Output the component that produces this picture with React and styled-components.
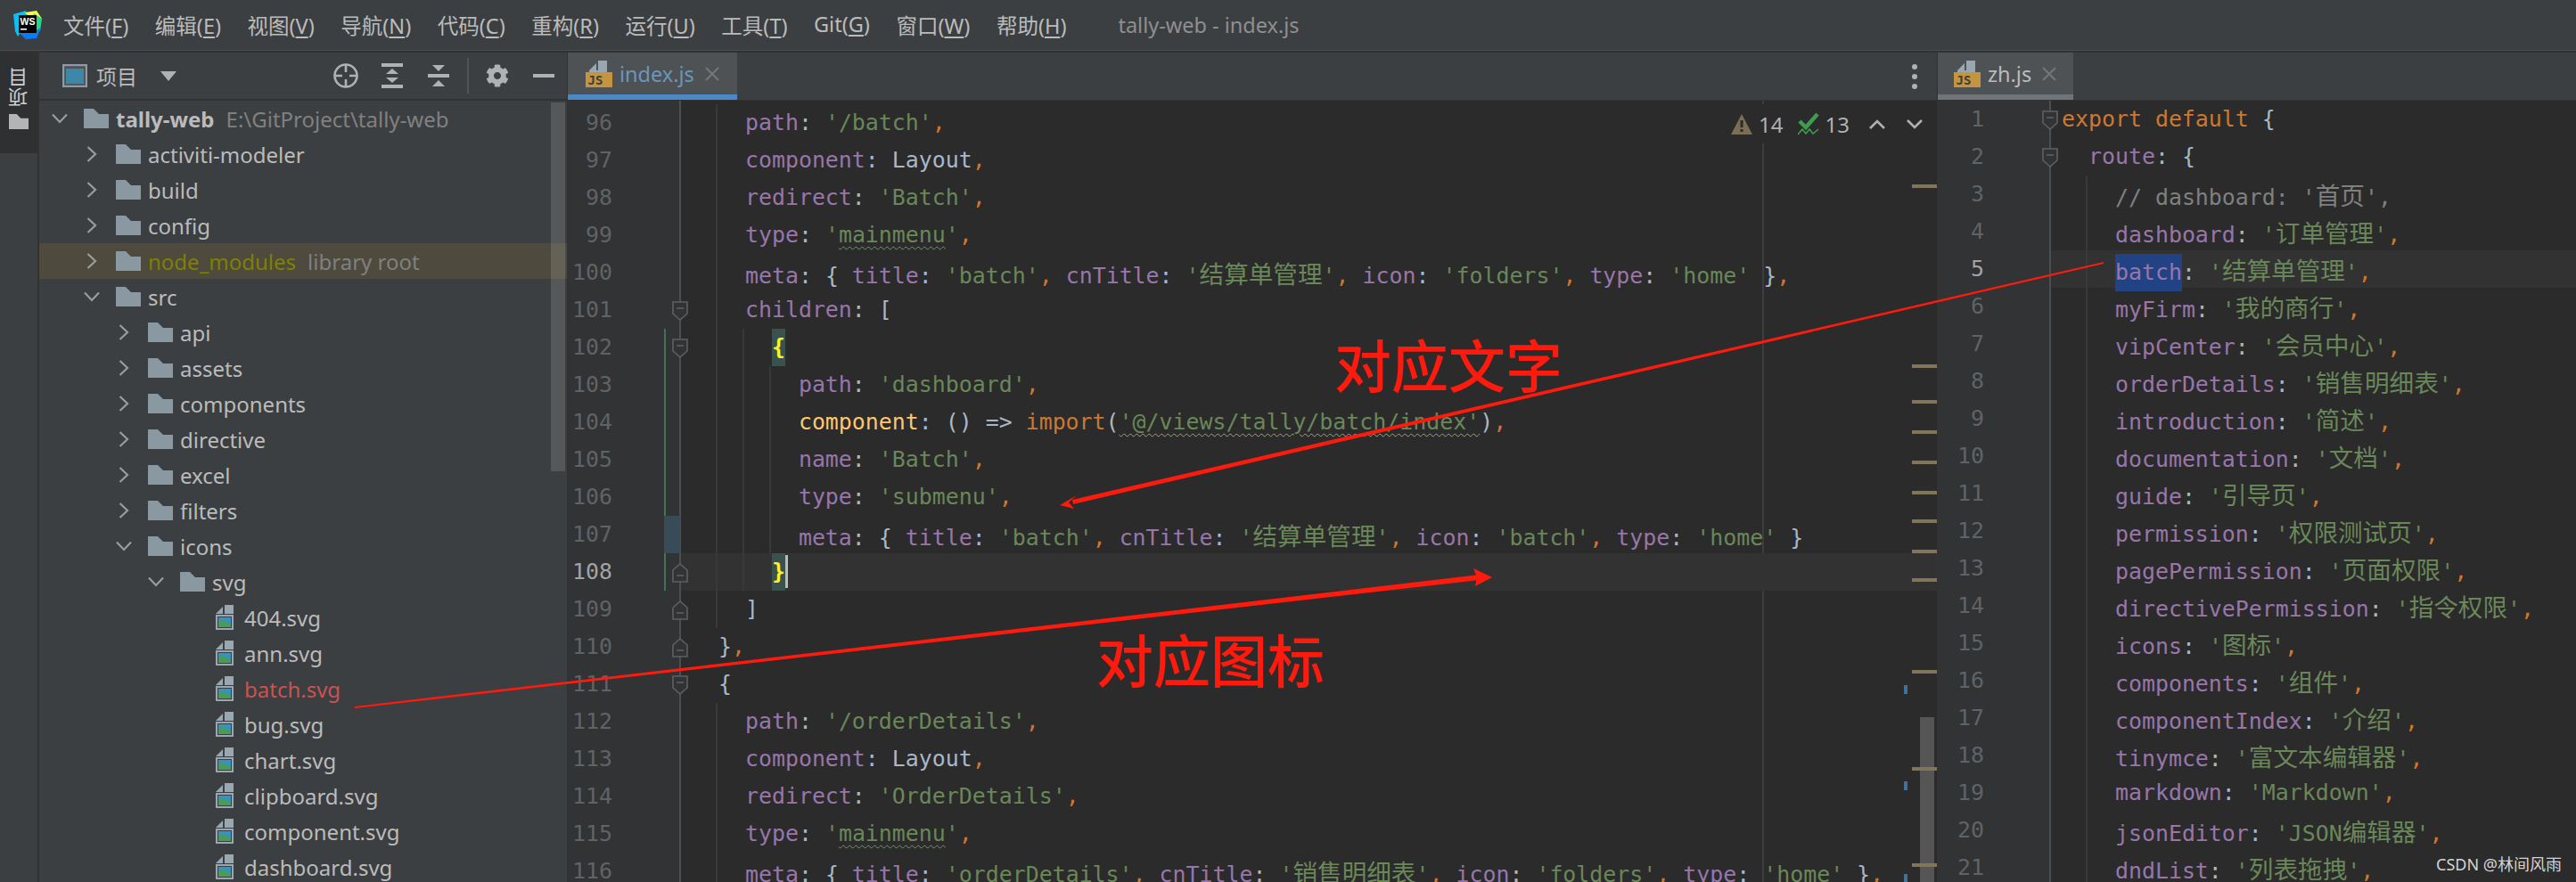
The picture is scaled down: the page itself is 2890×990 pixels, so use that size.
import React from "react";
import styled, { createGlobalStyle } from "styled-components";
import { FaCog } from "react-icons/fa";

const UI_FONT = '"Noto Sans", "Noto Sans CJK SC", sans-serif';
const MONO_FONT = '"DejaVu Sans Mono", "Noto Sans CJK SC", monospace';

const menus = [
  ["文件", "F"],
  ["编辑", "E"],
  ["视图", "V"],
  ["导航", "N"],
  ["代码", "C"],
  ["重构", "R"],
  ["运行", "U"],
  ["工具", "T"],
  ["Git", "G"],
  ["窗口", "W"],
  ["帮助", "H"],
];

const tree = [
  { level: 0, name: "tally-web", open: true, root: true, note: "E:\\GitProject\\tally-web" },
  { level: 1, name: "activiti-modeler" },
  { level: 1, name: "build" },
  { level: 1, name: "config" },
  { level: 1, name: "node_modules", library: true, note: "library root" },
  { level: 1, name: "src", open: true },
  { level: 2, name: "api" },
  { level: 2, name: "assets" },
  { level: 2, name: "components" },
  { level: 2, name: "directive" },
  { level: 2, name: "excel" },
  { level: 2, name: "filters" },
  { level: 2, name: "icons", open: true },
  { level: 3, name: "svg", open: true },
  { level: 4, name: "404.svg", file: true },
  { level: 4, name: "ann.svg", file: true },
  { level: 4, name: "batch.svg", file: true, changed: true },
  { level: 4, name: "bug.svg", file: true },
  { level: 4, name: "chart.svg", file: true },
  { level: 4, name: "clipboard.svg", file: true },
  { level: 4, name: "component.svg", file: true },
  { level: 4, name: "dashboard.svg", file: true },
];

const indexLines = [
  "    path: '/batch',",
  "    component: Layout,",
  "    redirect: 'Batch',",
  "    type: 'mainmenu',",
  "    meta: { title: 'batch', cnTitle: '结算单管理', icon: 'folders', type: 'home' },",
  "    children: [",
  "      {",
  "        path: 'dashboard',",
  "        component: () => import('@/views/tally/batch/index'),",
  "        name: 'Batch',",
  "        type: 'submenu',",
  "        meta: { title: 'batch', cnTitle: '结算单管理', icon: 'batch', type: 'home' }",
  "      }",
  "    ]",
  "  },",
  "  {",
  "    path: '/orderDetails',",
  "    component: Layout,",
  "    redirect: 'OrderDetails',",
  "    type: 'mainmenu',",
  "    meta: { title: 'orderDetails', cnTitle: '销售明细表', icon: 'folders', type: 'home' },",
];

const zhLines = [
  "export default {",
  "  route: {",
  "    // dashboard: '首页',",
  "    dashboard: '订单管理',",
  "    batch: '结算单管理',",
  "    myFirm: '我的商行',",
  "    vipCenter: '会员中心',",
  "    orderDetails: '销售明细表',",
  "    introduction: '简述',",
  "    documentation: '文档',",
  "    guide: '引导页',",
  "    permission: '权限测试页',",
  "    pagePermission: '页面权限',",
  "    directivePermission: '指令权限',",
  "    icons: '图标',",
  "    components: '组件',",
  "    componentIndex: '介绍',",
  "    tinymce: '富文本编辑器',",
  "    markdown: 'Markdown',",
  "    jsonEditor: 'JSON编辑器',",
  "    dndList: '列表拖拽',",
];

const indexFolds = { 101: "down", 102: "down", 108: "up", 109: "up", 110: "up", 111: "down" };
const zhFolds = { 1: "down", 2: "down" };
const stripeTops = [208, 410, 450, 484, 518, 552, 584, 618, 650, 753, 862, 970];
const blueTops = [770, 878, 982];

const GlobalStyle = createGlobalStyle`
  html, body {
    margin: 0;
    padding: 0;
    background: #3c3f41;
  }
`;

const Page = styled.div`
  position: relative;
  width: 2890px;
  height: 990px;
  overflow: hidden;
  display: flex;
  flex-direction: column;
  font-family: ${UI_FONT};
  background: #3c3f41;
`;

const TitleBar = styled.header`
  height: 57px;
  flex: none;
  box-sizing: border-box;
  display: flex;
  align-items: center;
  padding-left: 14px;
  color: #bbbbbb;
  font-size: 23.5px;
  border-bottom: 1px solid #4a4c4e;
`;

const Menu = styled.nav`
  display: flex;
  gap: 29.5px;
  margin-left: 23px;
`;

const MenuItem = styled.span`
  white-space: nowrap;
  u {
    text-underline-offset: 3px;
  }
`;

const WindowTitle = styled.span`
  margin-left: 58px;
  color: #8d8f91;
  white-space: nowrap;
`;

const Body = styled.div`
  flex: 1;
  min-height: 0;
  display: flex;
  border-top: 2px solid #323232;
`;

const Strip = styled.aside`
  width: 44px;
  flex: none;
  box-sizing: border-box;
  border-right: 2px solid #323232;
`;

const StripTab = styled.div`
  height: 113px;
  background: #2e3032;
  display: flex;
  flex-direction: column;
  align-items: center;
  padding-top: 17px;
  box-sizing: border-box;
  gap: 8px;
`;

const VerticalLabel = styled.span`
  writing-mode: vertical-rl;
  transform: rotate(180deg);
  color: #d0d0d0;
  font-size: 22px;
  line-height: 22px;
`;

const ProjectPanel = styled.section`
  position: relative;
  width: 592px;
  flex: none;
  display: flex;
  flex-direction: column;
  border-right: 1px solid #323232;
`;

const PanelHeader = styled.div`
  height: 54px;
  flex: none;
  box-sizing: border-box;
  border-bottom: 2px solid #323232;
  display: flex;
  align-items: center;
  padding-left: 26px;
  color: #bbbbbb;
  font-size: 23px;
`;

const PanelTitle = styled.span`
  margin-left: 10px;
`;

const Dropdown = styled.span`
  margin-left: 26px;
  width: 0;
  height: 0;
  border-left: 9px solid transparent;
  border-right: 9px solid transparent;
  border-top: 11px solid #afb1b3;
`;

const Tools = styled.div`
  margin-left: auto;
  display: flex;
  align-items: center;
  color: #afb1b3;
`;

const ToolButton = styled.span`
  width: 52px;
  height: 52px;
  display: flex;
  align-items: center;
  justify-content: center;
`;

const ToolSeparator = styled.span`
  width: 2px;
  height: 40px;
  margin: 0 6px;
  background: #515456;
`;

const Tree = styled.div`
  display: flex;
  flex-direction: column;
`;

const TreeRow = styled.div`
  height: 40px;
  flex: none;
  display: flex;
  align-items: center;
  padding-left: ${(p) => 13 + p.$level * 36}px;
  background: ${(p) => (p.$library ? "#4e4a3e" : "transparent")};
  font-size: 24px;
  white-space: nowrap;
  color: #bbbbbb;
`;

const ChevronBox = styled.span`
  width: 20px;
  height: 40px;
  flex: none;
  display: flex;
  align-items: center;
  justify-content: center;
  margin-right: 17px;
`;

const FileIconSlot = styled.span`
  display: flex;
  margin-left: 4px;
`;

const TreeName = styled.span`
  margin-left: ${(p) => (p.$file ? 12 : 8)}px;
  font-weight: ${(p) => (p.$root ? 700 : 400)};
  color: ${(p) => (p.$changed ? "#c75450" : p.$library ? "#808000" : "#bbbbbb")};
`;

const TreeNote = styled.span`
  margin-left: 13px;
  color: #808080;
`;

const TreeScrollbar = styled.div`
  position: absolute;
  left: 574px;
  top: 56px;
  width: 16px;
  height: 414px;
  background: rgba(255, 255, 255, 0.13);
`;

const Editors = styled.main`
  flex: 1;
  min-width: 0;
  display: flex;
`;

const EditorPane = styled.section`
  position: relative;
  width: ${(p) => p.$width}px;
  flex: none;
  display: flex;
  flex-direction: column;
  border-left: ${(p) => (p.$split ? "1px solid #323232" : "none")};
  box-sizing: border-box;
`;

const TabBar = styled.div`
  height: 54px;
  flex: none;
  box-sizing: border-box;
  display: flex;
  align-items: stretch;
  justify-content: space-between;
  background: #3c3f41;
  border-bottom: 1px solid #323232;
`;

const Tab = styled.div`
  width: ${(p) => p.$width}px;
  box-sizing: border-box;
  display: flex;
  align-items: center;
  padding: 0 0 6px ${(p) => p.$pad}px;
  background: #4e5254;
  box-shadow: inset 0 -6px 0 ${(p) => p.$accent};
  color: ${(p) => p.$color};
  font-size: 23.5px;
`;

const TabName = styled.span`
  margin-left: 8px;
`;

const TabClose = styled.svg`
  margin-left: 12px;
  flex: none;
`;

const Kebab = styled.div`
  width: 50px;
  display: flex;
  flex-direction: column;
  align-items: center;
  justify-content: center;
  gap: 5px;
  span {
    width: 6px;
    height: 6px;
    border-radius: 50%;
    background: #afb1b3;
  }
`;

const EditorBody = styled.div`
  flex: 1;
  min-height: 0;
  display: flex;
`;

const Gutter = styled.div`
  position: relative;
  z-index: 1;
  width: ${(p) => p.$width}px;
  flex: none;
  box-sizing: border-box;
  padding-top: ${(p) => p.$top}px;
  background: #313335;
  border-right: 2px solid #4c4e50;
  display: flex;
  flex-direction: column;
`;

const GutterCell = styled.div`
  position: relative;
  height: 42px;
  flex: none;
  box-sizing: border-box;
  padding-right: ${(p) => p.$numberRight}px;
  text-align: right;
  font-family: ${MONO_FONT};
  font-size: 24.9px;
  line-height: 42px;
  color: ${(p) => (p.$current ? "#a4a3a3" : "#606366")};
`;

const ChangeBar = styled.span`
  position: absolute;
  left: 108px;
  top: 0;
  bottom: 0;
  width: 2px;
  background: #447152;
`;

const ModifiedBlock = styled.span`
  position: absolute;
  left: 108px;
  top: 0;
  bottom: 0;
  width: 18px;
  background: #374c57;
`;

const FoldIcon = styled.svg`
  position: absolute;
  right: -10px;
  top: 11px;
`;

const CodeArea = styled.div`
  position: relative;
  flex: 1;
  min-width: 0;
  box-sizing: border-box;
  padding-top: ${(p) => p.$top}px;
  background: #2b2b2b;
  overflow: hidden;
`;

const MarginLine = styled.span`
  position: absolute;
  left: 1213px;
  top: 0;
  bottom: 0;
  width: 2px;
  background: #3d3d3d;
`;

const CodeLine = styled.div`
  position: relative;
  height: 42px;
  padding-left: 12px;
  font-family: ${MONO_FONT};
  font-size: 24.9px;
  line-height: 42px;
  white-space: pre;
  color: #a9b7c6;
  background: ${(p) => (p.$current ? "#323232" : "transparent")};
`;

const IndentGuide = styled.span`
  position: absolute;
  top: 0;
  bottom: 0;
  width: 2px;
  left: ${(p) => 12 + p.$col * 15 - 3}px;
  background: #393939;
`;

const Prop = styled.span`
  color: #9876aa;
`;

const Str = styled.span`
  color: #6a8759;
`;

const Keyword = styled.span`
  color: #cc7832;
`;

const Method = styled.span`
  color: #ffc66d;
`;

const Comment = styled.span`
  color: #808080;
`;

const Cjk = styled.span`
  font-family: "Noto Sans CJK SC", sans-serif;
  font-size: 27.6px;
`;

const Wavy = styled.span`
  text-decoration: underline wavy ${(p) => p.$color};
  text-decoration-thickness: 1px;
  text-underline-offset: 4px;
`;

const Selected = styled.span`
  display: inline-block;
  height: 42px;
  background: #214283;
`;

const Brace = styled.span`
  position: relative;
  display: inline-block;
  height: 42px;
  color: #ffef28;
  font-weight: 700;
  background: #3b514d;
`;

const Caret = styled.span`
  position: absolute;
  left: 15px;
  top: 2px;
  width: 3px;
  height: 37px;
  background: #bbbbbb;
`;

const Inspections = styled.div`
  position: absolute;
  top: 4px;
  right: 16px;
  height: 44px;
  display: flex;
  align-items: center;
  background: #2b2b2b;
  color: #afb1b3;
  font-size: 24px;
  padding-left: 4px;
`;

const Count = styled.span`
  margin: 0 ${(p) => p.$after}px 0 7px;
`;

const NavCaret = styled.svg`
  flex: none;
  margin-left: ${(p) => p.$before}px;
`;

const Stripe = styled.span`
  position: absolute;
  right: 0;
  width: 28px;
  height: 4px;
  background: #80765a;
  z-index: 1;
`;

const BlueMark = styled.span`
  position: absolute;
  right: 33px;
  width: 4px;
  height: 10px;
  background: #40719c;
`;

const EditorScrollbar = styled.span`
  position: absolute;
  right: 3px;
  top: 692px;
  bottom: 0;
  width: 16px;
  background: rgba(255, 255, 255, 0.2);
`;

const Arrows = styled.svg`
  position: absolute;
  left: 0;
  top: 0;
  pointer-events: none;
  z-index: 5;
`;

const Note = styled.span`
  position: absolute;
  left: ${(p) => p.$x}px;
  top: ${(p) => p.$y}px;
  z-index: 5;
  font-family: "Noto Sans CJK SC", sans-serif;
  font-size: 64px;
  line-height: 64px;
  font-weight: 500;
  color: #ff1a0e;
  white-space: nowrap;
`;

const Watermark = styled.span`
  position: absolute;
  right: 16px;
  bottom: 8px;
  z-index: 5;
  font-family: "Noto Sans", "Noto Sans CJK SC", sans-serif;
  font-size: 18px;
  line-height: 24px;
  color: #d4d4d4;
  white-space: nowrap;
`;

function Logo() {
  return (
    <svg width="34" height="34" viewBox="0 0 34 34">
      <polygon points="1,5 15,1 18,12 6,30 3,24" fill="#07c3f2" />
      <polygon points="14,3 27,1 33,10 24,14" fill="#fcf84a" />
      <polygon points="24,4 33,10 31,24 20,20" fill="#21d789" />
      <polygon points="6,24 22,26 32,20 27,32 15,33" fill="#087cfa" />
      <rect x="7" y="6" width="20" height="20" fill="#000" />
      <text x="8.5" y="16.5" fontFamily="Liberation Sans, sans-serif" fontWeight="700" fontSize="10.5" fill="#fff">
        WS
      </text>
      <rect x="9" y="21" width="7" height="1.6" fill="#fff" />
    </svg>
  );
}

function FolderIcon({ size = 28, color = "#8a98a2" }) {
  return (
    <svg width={size} height={(size * 22) / 28} viewBox="0 0 28 22" style={{ flex: "none" }}>
      <polygon points="0,0 11,0 17,6 28,6 28,22 0,22" fill={color} />
    </svg>
  );
}

function Chevron({ open }) {
  return open ? (
    <svg width="18" height="12" viewBox="0 0 18 12">
      <path d="M1 1.5 L9 10 L17 1.5" fill="none" stroke="#9a9da0" strokeWidth="2.2" />
    </svg>
  ) : (
    <svg width="12" height="18" viewBox="0 0 12 18">
      <path d="M1.5 1 L10 9 L1.5 17" fill="none" stroke="#9a9da0" strokeWidth="2.2" />
    </svg>
  );
}

function ImageFileIcon() {
  return (
    <FileIconSlot>
      <svg width="20" height="28" viewBox="0 0 20 28">
        <polygon points="8,2 8,10 0,10" fill="#9aa7b0" />
        <polygon points="10,0 20,0 20,10 10,10" fill="#9aa7b0" />
        <rect x="1" y="12" width="18" height="15" fill="#3c3f41" stroke="#9aa7b0" strokeWidth="2" />
        <rect x="3" y="14" width="14" height="11" fill="#3592c4" />
        <polygon points="3,25 3,19 8,17 17,22 17,25" fill="#499c54" />
      </svg>
    </FileIconSlot>
  );
}

function JsFileIcon() {
  return (
    <svg width="30" height="30" viewBox="0 0 30 30" style={{ flex: "none" }}>
      <polygon points="12,3 12,11 4,11" fill="#9aa7b0" />
      <polygon points="14,0 24,0 24,11 14,11" fill="#9aa7b0" />
      <polygon points="4,11 24,11 24,13 4,13" fill="#9aa7b0" />
      <rect x="0" y="13" width="30" height="17" fill="#c4943f" />
      <text x="2.5" y="27" fontFamily="DejaVu Sans Mono, monospace" fontSize="14" fontWeight="700" fill="#3c3f41">
        JS
      </text>
    </svg>
  );
}

function CloseIcon() {
  return (
    <TabClose width="16" height="16" viewBox="0 0 16 16">
      <path d="M1 1 L15 15 M15 1 L1 15" stroke="#74777a" strokeWidth="2" />
    </TabClose>
  );
}

function Fold({ dir }) {
  const shape = dir === "down" ? "M1 1 H17 V14 L9 21 L1 14 Z" : "M1 21 H17 V8 L9 1 L1 8 Z";
  return (
    <FoldIcon width="18" height="22" viewBox="0 0 18 22">
      <path d={shape} fill="#313335" stroke="#5e6163" strokeWidth="1.6" />
      <path d={dir === "down" ? "M5 8 H13" : "M5 14 H13"} stroke="#5e6163" strokeWidth="1.6" />
    </FoldIcon>
  );
}

function ToolIcon({ kind }) {
  const c = "#afb1b3";
  if (kind === "locate") {
    return (
      <svg width="28" height="28" viewBox="0 0 28 28">
        <circle cx="14" cy="14" r="12.5" fill="none" stroke={c} strokeWidth="2.6" />
        <path d="M14 2 V10 M14 18 V26 M2 14 H10 M18 14 H26" stroke={c} strokeWidth="2.6" />
      </svg>
    );
  }
  if (kind === "expand") {
    return (
      <svg width="24" height="28" viewBox="0 0 24 28">
        <rect width="24" height="4" fill={c} />
        <rect y="24" width="24" height="4" fill={c} />
        <polygon points="12,6 19,12 5,12" fill={c} />
        <polygon points="12,22 19,16 5,16" fill={c} />
      </svg>
    );
  }
  if (kind === "collapse") {
    return (
      <svg width="24" height="26" viewBox="0 0 24 26">
        <rect y="11" width="24" height="4" fill={c} />
        <polygon points="12,8 19,1 5,1" fill={c} />
        <polygon points="12,18 19,25 5,25" fill={c} />
      </svg>
    );
  }
  return (
    <svg width="24" height="4" viewBox="0 0 24 4">
      <rect width="24" height="4" fill={c} />
    </svg>
  );
}

function WarnIcon() {
  return (
    <svg width="24" height="23" viewBox="0 0 24 23" style={{ flex: "none" }}>
      <polygon points="12,0 24,23 0,23" fill="#7a6f55" />
      <rect x="10.5" y="7" width="3" height="8" fill="#2b2b2b" />
      <rect x="10.5" y="17" width="3" height="3" fill="#2b2b2b" />
    </svg>
  );
}

function TypoIcon() {
  return (
    <svg width="24" height="25" viewBox="0 0 24 25" style={{ flex: "none" }}>
      <path d="M2 9 L9 16 L22 1" fill="none" stroke="#3f9b50" strokeWidth="4.5" />
      <path d="M0 24 L5 18 L9 23 L13 18 L17 23 L23 18" fill="none" stroke="#3f9b50" strokeWidth="1.6" />
    </svg>
  );
}

function NavArrow({ up, before }) {
  return (
    <NavCaret $before={before} width="18" height="11" viewBox="0 0 18 11">
      <path d={up ? "M1 10 L9 2 L17 10" : "M1 1 L9 9 L17 1"} fill="none" stroke="#afb1b3" strokeWidth="2.6" />
    </NavCaret>
  );
}

// splits a literal so the chinese part gets its wider font
function withCjk(text) {
  return text
    .split(/([\u4e00-\u9fff]+)/)
    .map((part, i) => (i % 2 ? <Cjk key={i}>{part}</Cjk> : part));
}

function renderString(text, key) {
  if (text === "'mainmenu'") {
    return (
      <Str key={key}>
        '<Wavy $color="#6f9a63">mainmenu</Wavy>'
      </Str>
    );
  }
  if (text.startsWith("'@/views")) {
    return (
      <Str key={key}>
        <Wavy $color="#a3a27a">{text}</Wavy>
      </Str>
    );
  }
  return <Str key={key}>{withCjk(text)}</Str>;
}

const TOKEN = /(\/\/.*$)|('[^']*')|(export default)|\b(import)\b|([A-Za-z]+)(?=:)|(,)/g;

function highlight(text, selectWord) {
  const out = [];
  let last = 0;
  let key = 0;
  for (const m of text.matchAll(TOKEN)) {
    if (m.index > last) out.push(text.slice(last, m.index));
    const [all, comment, str, exp, imp, prop, comma] = m;
    key += 1;
    if (comment) out.push(<Comment key={key}>{withCjk(comment)}</Comment>);
    else if (str) out.push(renderString(str, key));
    else if (exp || imp || comma) out.push(<Keyword key={key}>{all}</Keyword>);
    else if (prop === selectWord) out.push(<Selected key={key}><Prop>{prop}</Prop></Selected>);
    else if (prop === "component" && text.includes("=>")) out.push(<Method key={key}>{prop}</Method>);
    else out.push(<Prop key={key}>{prop}</Prop>);
    last = m.index + all.length;
  }
  if (last < text.length) out.push(text.slice(last));
  return out;
}

function CodeEditor({ lines, first, top, gutterWidth, numberRight, folds, current, selectWord, braces, children }) {
  return (
    <EditorBody>
      <Gutter $width={gutterWidth} $top={top}>
        {lines.map((_, i) => {
          const n = first + i;
          const changed = braces && n >= 102 && n <= 108;
          return (
            <GutterCell key={n} $numberRight={numberRight} $current={n === current}>
              {n}
              {changed && <ChangeBar />}
              {changed && n === 107 && <ModifiedBlock />}
              {folds[n] && <Fold dir={folds[n]} />}
            </GutterCell>
          );
        })}
      </Gutter>
      <CodeArea $top={top}>
        {children}
        {lines.map((text, i) => {
          const n = first + i;
          const indent = text.match(/^ */)[0].length;
          const guides = [];
          for (let col = 2; col < indent; col += 2) guides.push(col);
          const isBrace = braces && (n === 102 || n === 108);
          return (
            <CodeLine key={n} $current={n === current}>
              {guides.map((col) => (
                <IndentGuide key={col} $col={col} />
              ))}
              {isBrace ? (
                <>
                  {" ".repeat(indent)}
                  <Brace>
                    {text.trim()}
                    {n === 108 && <Caret />}
                  </Brace>
                </>
              ) : (
                highlight(text, n === current ? selectWord : null)
              )}
            </CodeLine>
          );
        })}
      </CodeArea>
    </EditorBody>
  );
}

export default function App() {
  return (
    <Page>
      <GlobalStyle />
      <TitleBar>
        <Logo />
        <Menu>
          {menus.map(([label, key]) => (
            <MenuItem key={key}>
              {label}(<u>{key}</u>)
            </MenuItem>
          ))}
        </Menu>
        <WindowTitle>tally-web - index.js</WindowTitle>
      </TitleBar>

      <Body>
        <Strip>
          <StripTab>
            <VerticalLabel>项目</VerticalLabel>
            <FolderIcon size={22} color="#b4b4b4" />
          </StripTab>
        </Strip>

        <ProjectPanel>
          <PanelHeader>
            <svg width="28" height="26" viewBox="0 0 28 26">
              <rect x="1" y="1" width="26" height="24" fill="#4e5254" stroke="#8d9ba5" strokeWidth="2.4" />
              <rect x="4" y="5" width="20" height="17" fill="#3d88a8" />
            </svg>
            <PanelTitle>项目</PanelTitle>
            <Dropdown />
            <Tools>
              <ToolButton>
                <ToolIcon kind="locate" />
              </ToolButton>
              <ToolButton>
                <ToolIcon kind="expand" />
              </ToolButton>
              <ToolButton>
                <ToolIcon kind="collapse" />
              </ToolButton>
              <ToolSeparator />
              <ToolButton>
                <FaCog size={26} />
              </ToolButton>
              <ToolButton>
                <ToolIcon kind="hide" />
              </ToolButton>
            </Tools>
          </PanelHeader>
          <Tree>
            {tree.map((item) => (
              <TreeRow key={item.name} $level={item.level} $library={item.library}>
                <ChevronBox>{!item.file && <Chevron open={item.open} />}</ChevronBox>
                {item.file ? <ImageFileIcon /> : <FolderIcon />}
                <TreeName $file={item.file} $root={item.root} $changed={item.changed} $library={item.library}>
                  {item.name}
                </TreeName>
                {item.note && <TreeNote>{item.note}</TreeNote>}
              </TreeRow>
            ))}
          </Tree>
          <TreeScrollbar />
        </ProjectPanel>

        <Editors>
          <EditorPane $width={1536}>
            <TabBar>
              <Tab $width={190} $pad={20} $accent="#4a88c7" $color="#6897bb">
                <JsFileIcon />
                <TabName>index.js</TabName>
                <CloseIcon />
              </Tab>
              <Kebab>
                <span />
                <span />
                <span />
              </Kebab>
            </TabBar>
            <CodeEditor
              lines={indexLines}
              first={96}
              top={4}
              gutterWidth={127}
              numberRight={75}
              folds={indexFolds}
              current={108}
              braces
            >
              <MarginLine />
              <Inspections>
                <WarnIcon />
                <Count $after={16}>14</Count>
                <TypoIcon />
                <Count $after={4}>13</Count>
                <NavArrow up before={18} />
                <NavArrow before={24} />
              </Inspections>
              {stripeTops.map((y) => (
                <Stripe key={y} style={{ top: y - 114 }} />
              ))}
              {blueTops.map((y) => (
                <BlueMark key={y} style={{ top: y - 114 }} />
              ))}
              <EditorScrollbar />
            </CodeEditor>
          </EditorPane>

          <EditorPane $width={717} $split>
            <TabBar>
              <Tab $width={152} $pad={18} $accent="#70757a" $color="#bbbbbb">
                <JsFileIcon />
                <TabName>zh.js</TabName>
                <CloseIcon />
              </Tab>
            </TabBar>
            <CodeEditor
              lines={zhLines}
              first={1}
              top={0}
              gutterWidth={127}
              numberRight={73}
              folds={zhFolds}
              current={5}
              selectWord="batch"
            />
          </EditorPane>
        </Editors>
      </Body>

      <Arrows width="2890" height="990" viewBox="0 0 2890 990">
        <polygon points="2360,294 2360,296 1204,566 1203,561" fill="#ff1a0e" />
        <polygon points="1189,567 1208,556 1199,564 1205,571" fill="#ff1a0e" />
        <polygon points="398,793 398,795 1660,651 1660,645" fill="#ff1a0e" />
        <polygon points="1674,648 1653,638 1657,648 1655,658" fill="#ff1a0e" />
      </Arrows>
      <Note $x={1497} $y={375}>对应文字</Note>
      <Note $x={1230} $y={706}>对应图标</Note>
      <Watermark>CSDN @林间风雨</Watermark>
    </Page>
  );
}
